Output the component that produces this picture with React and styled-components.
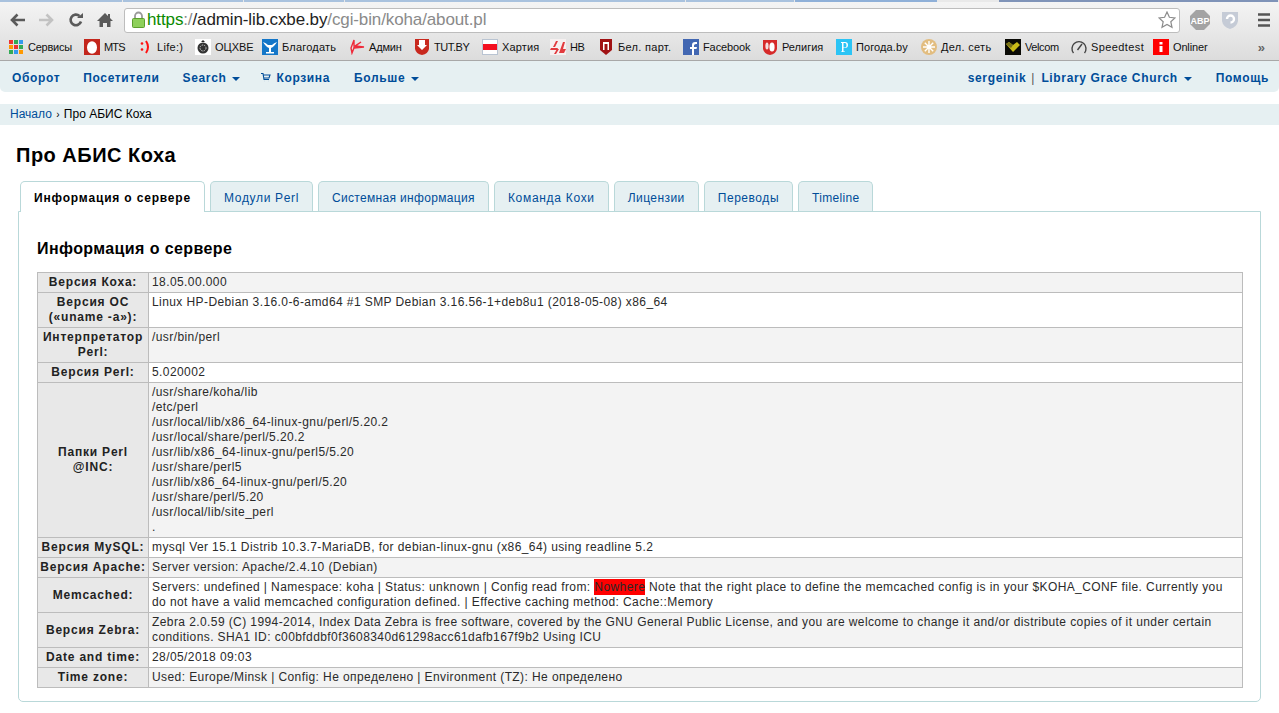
import React from "react";
import styled, { createGlobalStyle } from "styled-components";

const Global = createGlobalStyle`
  html, body { margin: 0; padding: 0; background: #fff; }
  body { font-family: "Liberation Sans", Arial, sans-serif; font-size: 12px; color: #000; overflow: hidden; }
`;

const Strip = styled.div`display:flex;height:2px;background:#e9e9e9;`;
const StripTab = styled.div`flex:${p => p.$w ? `0 0 ${p.$w}px` : "1"};background:${p => p.$c};margin-right:${p => p.$gap || 1}px;`;

const Toolbar = styled.div`
  display:flex;align-items:center;height:34px;padding:0 9px;box-sizing:border-box;
  background:linear-gradient(#f4f4f4,#e6e6e6);
`;
const NavIcon = styled.svg`width:16px;height:16px;flex:none;margin-right:${p => p.$mr}px;margin-top:2px;`;
const Omni = styled.div`
  flex:1;height:25px;box-sizing:border-box;margin:2px 10px 0 -1px;display:flex;align-items:center;
  background:#fff;border:1px solid #bdbdbd;border-radius:3px;padding:0 3px 0 6px;
`;
const UrlText = styled.div`font-size:17px;letter-spacing:-.12px;margin-left:1px;color:#8a8a8a;white-space:nowrap;flex:1;`;
const Green = styled.span`color:#0a8a00;`;
const Dark = styled.span`color:#222;`;
const ExtIcon = styled.svg`width:${p => p.$w || 20}px;height:20px;flex:none;margin-right:${p => p.$mr}px;margin-top:2px;`;

const Bookmarks = styled.div`
  display:flex;align-items:center;height:25px;box-sizing:border-box;padding:0 0 2px 8px;
  background:linear-gradient(#e6e6e6,#dcdcdc);border-bottom:1px solid #a8a8a8;
`;
const Bookmark = styled.div`display:flex;align-items:center;gap:4px;width:${p => p.$w}px;flex:none;`;
const BookmarkLabel = styled.span`font-size:11px;color:#111;white-space:nowrap;letter-spacing:${p => p.$ls}px;`;
const Fav = styled.svg`width:16px;height:16px;flex:none;`;
const Chevrons = styled.span`margin-left:auto;margin-right:14px;font-size:13px;font-weight:bold;color:#666;`;

const Nav = styled.nav`
  display:flex;justify-content:space-between;align-items:center;height:31px;box-sizing:border-box;
  background:#e6f0f2;border-radius:0 0 5px 5px;padding:2px 10px 0 12px;
`;
const NavGroup = styled.div`display:flex;align-items:center;`;
const NavLink = styled.a`
  display:inline-flex;align-items:center;font-weight:bold;font-size:12px;letter-spacing:.65px;color:#004d99;
  margin-right:${p => p.$mr ?? 0}px;white-space:nowrap;
`;
const Caret = styled.i`
  display:inline-block;margin-left:6px;margin-top:2px;width:0;height:0;
  border-left:4px solid transparent;border-right:4px solid transparent;border-top:4px solid #004d99;
`;
const Sep = styled.span`color:#555;margin:0 7px 0 5px;font-size:12px;`;
const Cart = styled.svg`width:11px;height:11px;margin-right:5px;`;

const Crumbs = styled.div`
  margin-top:12px;height:21px;box-sizing:border-box;background:#e6f0f2;padding:3px 0 0 10px;font-size:12px;line-height:15px;
`;
const CrumbLink = styled.a`color:#004d99;`;
const CrumbSep = styled.span`font-size:10px;margin:0 1px;`;

const Main = styled.main`padding:0 18px 0 18px;`;
const Title = styled.h1`font-size:20px;line-height:23px;font-weight:bold;margin:19px 0 14px -2px;letter-spacing:.5px;`;
const Tabs = styled.div`display:flex;gap:5px;margin-left:2px;position:relative;z-index:1;`;
const Tab = styled.a`
  box-sizing:border-box;padding:9px 13px 0;line-height:15px;font-size:12px;white-space:nowrap;
  border:1px solid #b9d8d9;border-bottom:none;border-radius:5px 5px 0 0;letter-spacing:${p => p.$ls}px;
  background:${p => p.$active ? "#fff" : "#e6f0f2"};
  color:${p => p.$active ? "#000" : "#004d99"};
  font-weight:${p => p.$active ? "bold" : "normal"};
  margin-bottom:${p => p.$active ? "-1px" : "0"};
  height:${p => p.$active ? "31px" : "30px"};
`;
const Panel = styled.section`
  border:1px solid #b9d8d9;border-radius:0 0 5px 5px;width:1243px;box-sizing:border-box;height:491px;padding:0 18px;
`;
const SubTitle = styled.h3`font-size:16px;line-height:18px;font-weight:bold;margin:28px 0 14px;letter-spacing:.4px;`;
const Table = styled.table`
  border-collapse:collapse;width:1206px;table-layout:fixed;font-size:12px;line-height:15px;
`;
const Row = styled.tr``;
const Th = styled.th`
  box-sizing:border-box;background:#e8e8e8;border:1px solid #bcbcbc;padding:2px 0;text-align:center;
  vertical-align:middle;font-weight:bold;color:#222;letter-spacing:.8px;
`;
const Td = styled.td`
  background:${p => p.$odd ? "#f3f3f3" : "#fff"};border:1px solid #bcbcbc;padding:2px 3px;vertical-align:top;color:#2a2a2a;
  letter-spacing:.41px;white-space:nowrap;
`;
const Alert = styled.span`background:#f00;padding:1px 0;`;

const Ico = {
  apps: (
    <Fav viewBox="0 0 16 16">
      {[["#e33", "#3a5", "#39e"], ["#f90", "#e33", "#3a5"], ["#3a5", "#39e", "#f90"]].map((r, y) =>
        r.map((c, x) => <rect key={`${x}${y}`} x={1 + x * 5} y={1 + y * 5} width="4" height="4" fill={c} />))}
    </Fav>
  ),
  mts: (
    <Fav viewBox="0 0 16 16"><rect width="16" height="16" fill="#c3261c" /><ellipse cx="8" cy="8.500" rx="5" ry="6.200" fill="#fff" /></Fav>
  ),
  life: (
    <Fav viewBox="0 0 16 16"><circle cx="5" cy="4.500" r="1.300" fill="#f11" /><circle cx="5" cy="10.500" r="1.300" fill="#f11" /><path d="M9 2q4 6 0 12" fill="none" stroke="#f11" strokeWidth="2" /></Fav>
  ),
  och: (
    <Fav viewBox="0 0 16 16"><rect width="16" height="16" fill="#fff" /><circle cx="8" cy="9" r="5.500" fill="#333" /><circle cx="8" cy="9" r="3" fill="none" stroke="#ccc" strokeDasharray="1.500 1" /><path d="M6 3h4L8 1z" fill="#222" /></Fav>
  ),
  blag: (
    <Fav viewBox="0 0 16 16"><rect width="16" height="16" fill="#1476c8" /><path d="M1 3q3 5 6 6V13h2V9q3-1 6-6-3 1-5 3H6Q4 4 1 3z" fill="#fff" /><rect x="4" y="13" width="8" height="1.500" fill="#fff" /></Fav>
  ),
  admin: (
    <Fav viewBox="0 0 16 16"><path d="M5 1L2 9l1 5 2-5 10-1-9-1 6-4-7 5z" fill="none" stroke="#ee2a3a" strokeWidth="1.400" /></Fav>
  ),
  tut: (
    <Fav viewBox="0 0 16 16"><path d="M1 0h14v10q-1 5-7 6-6-1-7-6z" fill="#c8281e" /><path d="M5 1h6v5h2L8 11 3 6h2z" fill="#fff" /></Fav>
  ),
  hart: (
    <Fav viewBox="0 0 16 16"><rect width="16" height="16" fill="#b9c4d2" /><rect x="1" y="1" width="14" height="4" fill="#fff" /><rect x="1" y="5" width="14" height="6" fill="#f30f1f" /><rect x="1" y="11" width="14" height="4" fill="#fff" /></Fav>
  ),
  nv: (
    <Fav viewBox="0 0 16 16"><rect width="16" height="16" fill="#f6f0f0" /><path d="M3 8L6 2h2L5 8zM1 9h7l-1 2H0zM4 15l3-5h2l-3 5zM9 3h4l-4 11h5l2-4h-3l2-7z" fill="#e23a3e" /></Fav>
  ),
  bel: (
    <Fav viewBox="0 0 16 16"><path d="M2 0h12v11l-6 5-6-5z" fill="#a01214" /><path d="M5 3h6v8H9.500V5h-3v6H5z" fill="#fff" /></Fav>
  ),
  fb: (
    <Fav viewBox="0 0 16 16"><rect width="16" height="16" fill="#4267b2" /><path d="M9 16v-6H7V8h2V6q0-3 3-3h2v2h-1q-2 0-2 1.500V8h3l-.5 2H11v6z" fill="#fff" /></Fav>
  ),
  rel: (
    <Fav viewBox="0 0 16 16"><path d="M1 1h14v9q-1 5-7 6-6-1-7-6z" fill="#d62a2a" /><ellipse cx="5" cy="7" rx="1.600" ry="3.500" fill="#f4dede" /><ellipse cx="10" cy="8" rx="2.600" ry="4.500" fill="#fff" /></Fav>
  ),
  pog: (
    <Fav viewBox="0 0 16 16"><rect width="16" height="16" fill="#2bc4f5" /><path d="M5 3h4q3 0 3 3t-3 3H7.500v3.500H9V13H5v-.5h1V4H5zM7.500 4v4.500H9q1.500 0 1.500-2.200T9 4z" fill="#fff" /></Fav>
  ),
  del: (
    <Fav viewBox="0 0 16 16"><circle cx="8" cy="8" r="8" fill="#e2bd80" /><g stroke="#fff" strokeWidth="1.400">
      <path d="M8 2v12M2 8h12M3.800 3.800l8.400 8.400M12.200 3.800l-8.400 8.400" /></g></Fav>
  ),
  vel: (
    <Fav viewBox="0 0 16 16"><rect width="16" height="16" fill="#0a0a05" /><path d="M1 5l3-2 4 3 4-3 3 3-7 7z" fill="#c8ba18" /><path d="M1 5l3-2 4 3-2 3z" fill="#77701a" /></Fav>
  ),
  speed: (
    <Fav viewBox="0 0 16 16"><path d="M2.500 14A7 7 0 1 1 13.500 14" fill="none" stroke="#444" strokeWidth="1.400" /><path d="M6.500 11L11 5" stroke="#444" strokeWidth="1.400" /></Fav>
  ),
  onl: (
    <Fav viewBox="0 0 16 16"><rect width="16" height="16" fill="#f00" /><rect x="6.500" y="3" width="3" height="2.500" fill="#fff" /><rect x="6.500" y="7" width="3" height="6" fill="#fff" /></Fav>
  ),
};

const bookmarks = [
  ["apps", "Сервисы", 76, -.25], ["mts", "MTS", 53, -.8], ["life", "Life:)", 58, .3], ["och", "ОЦХВЕ", 67, 0],
  ["blag", "Благодать", 87, .2], ["admin", "Админ", 65, -.15], ["tut", "TUT.BY", 68, -.4], ["hart", "Хартия", 68, .15],
  ["nv", "НВ", 48, -.4], ["bel", "Бел. парт.", 85, .3], ["fb", "Facebook", 79, -.1], ["rel", "Религия", 74, 0],
  ["pog", "Погода.by", 85, .1], ["del", "Дел. сеть", 84, .3], ["vel", "Velcom", 66, -.4], ["speed", "Speedtest", 82, .4],
  ["onl", "Onliner", 50, -.15],
];

const rows = [
  ["Версия Коха:", ["18.05.00.000"]],
  [<>Версия ОС<br />(«uname -a»):</>, ["Linux HP-Debian 3.16.0-6-amd64 #1 SMP Debian 3.16.56-1+deb8u1 (2018-05-08) x86_64"]],
  [<>Интерпретатор<br />Perl:</>, ["/usr/bin/perl"]],
  ["Версия Perl:", ["5.020002"]],
  [<>Папки Perl<br />@INC:</>, ["/usr/share/koha/lib", "/etc/perl", "/usr/local/lib/x86_64-linux-gnu/perl/5.20.2", "/usr/local/share/perl/5.20.2", "/usr/lib/x86_64-linux-gnu/perl5/5.20", "/usr/share/perl5", "/usr/lib/x86_64-linux-gnu/perl/5.20", "/usr/share/perl/5.20", "/usr/local/lib/site_perl", "."]],
  ["Версия MySQL:", ["mysql Ver 15.1 Distrib 10.3.7-MariaDB, for debian-linux-gnu (x86_64) using readline 5.2"]],
  ["Версия Apache:", ["Server version: Apache/2.4.10 (Debian)"]],
  ["Memcached:", [<>Servers: undefined | Namespace: koha | Status: unknown | Config read from: <Alert>Nowhere</Alert> Note that the right place to define the memcached config is in your $KOHA_CONF file. Currently you</>, "do not have a valid memcached configuration defined. | Effective caching method: Cache::Memory"]],
  ["Версия Zebra:", ["Zebra 2.0.59 (C) 1994-2014, Index Data Zebra is free software, covered by the GNU General Public License, and you are welcome to change it and/or distribute copies of it under certain", "conditions. SHA1 ID: c00bfddbf0f3608340d61298acc61dafb167f9b2 Using ICU"]],
  ["Date and time:", ["28/05/2018 09:03"]],
  ["Time zone:", ["Used: Europe/Minsk | Config: Не определено | Environment (TZ): Не определено"]],
];

const tabs = [["Информация о сервере", .83], ["Модули Perl", .66], ["Системная информация", .33], ["Команда Кохи", .7], ["Лицензии", .43], ["Переводы", .55], ["Timeline", .3]];

export default function App() {
  return (
    <>
      <Global />
      <Strip>
        <StripTab $w={122} $c="#a9c2de" /><StripTab $w={120} $c="#a9c2de" /><StripTab $w={100} $c="#a9c2de" />
        <StripTab $w={340} $c="#a9c2de" /><StripTab $w={108} $c="#a9c2de" /><StripTab $w={142} $gap={62} $c="#8fb0d8" />
        <StripTab $c="#7f93b8" />
      </Strip>
      <Toolbar>
        <NavIcon $mr={14} viewBox="0 0 16 16"><path d="M16 8H3M8.500 2.500L3 8l5.500 5.500" fill="none" stroke="#5a5a5a" strokeWidth="2.600" /></NavIcon>
        <NavIcon $mr={13} viewBox="0 0 16 16"><path d="M0 8h13M7.500 2.500L13 8l-5.500 5.500" fill="none" stroke="#c2c2c2" strokeWidth="2.600" /></NavIcon>
        <NavIcon $mr={13} viewBox="0 0 16 16"><path d="M13 9.500A5.300 5.300 0 1 1 11.500 4" fill="none" stroke="#5a5a5a" strokeWidth="2.600" /><path d="M9 6h6V1z" fill="#5a5a5a" /></NavIcon>
        <NavIcon $mr={12} viewBox="0 0 16 16"><path d="M8 1L0 9h2.500v6H6v-4h4v4h3.500V9H16l-3-3V2h-2v2z" fill="#5a5a5a" /></NavIcon>
        <Omni>
          <svg width="15" height="18" viewBox="0 0 15 18"><path d="M4 8V5a3.500 3.500 0 0 1 7 0v3" fill="none" stroke="#9a9a9a" strokeWidth="1.800" /><rect x="1.500" y="7.500" width="12" height="9" rx="1" fill="#8ed05a" stroke="#5c9e2e" /></svg>
          <UrlText><Green>https</Green>:/<Dark>/admin-lib.cxbe.by</Dark>/cgi-bin/koha/about.pl</UrlText>
          <svg width="18" height="18" viewBox="0 0 18 18"><path d="M9 1l2.400 5.300 5.600.6-4.200 3.800 1.200 5.600L9 13.500l-5 2.800 1.200-5.600L1 6.900l5.600-.6z" fill="#fff" stroke="#8c8c8c" strokeWidth="1.200" /></svg>
        </Omni>
        <ExtIcon $mr={12} viewBox="0 0 20 20"><path d="M6 0h8l6 6v8l-6 6H6l-6-6V6z" fill="#a3a3a3" /><text x="10" y="13.500" textAnchor="middle" fontSize="9" fontWeight="bold" fill="#fff" fontFamily="Liberation Sans">ABP</text></ExtIcon>
        <ExtIcon $mr={20} $w={16} viewBox="0 0 16 20"><path d="M0 2h16v9q-1 6-8 8-7-2-8-8z" fill="#c5cbd6" /><path d="M5 9a3.500 3.500 0 1 1 3.500 3.500" fill="none" stroke="#fff" strokeWidth="2.400" /></ExtIcon>
        <ExtIcon $mr={0} $w={12} viewBox="0 0 12 20"><path d="M0 4.500h12M0 10h12M0 15.500h12" stroke="#555" strokeWidth="2.600" /></ExtIcon>
      </Toolbar>
      <Bookmarks>
        {bookmarks.map(([icon, label, w, ls]) => (
          <Bookmark key={label} $w={w}>{Ico[icon]}<BookmarkLabel $ls={ls}>{label}</BookmarkLabel></Bookmark>
        ))}
        <Chevrons>»</Chevrons>
      </Bookmarks>
      <Nav>
        <NavGroup>
          <NavLink $mr={23}>Оборот</NavLink>
          <NavLink $mr={23}>Посетители</NavLink>
          <NavLink $mr={20}>Search<Caret /></NavLink>
          <NavLink $mr={24}>
            <Cart viewBox="0 0 11 11"><path d="M1 1.500h2l1 6h5M3.500 3h6.500l-1 3H4M4.500 9h.1M8.500 9h.1" fill="none" stroke="#004d99" strokeWidth="1.100" /></Cart>
            Корзина
          </NavLink>
          <NavLink>Больше<Caret /></NavLink>
        </NavGroup>
        <NavGroup>
          <NavLink>sergeinik</NavLink><Sep>|</Sep>
          <NavLink $mr={24}>Library Grace Church<Caret /></NavLink>
          <NavLink>Помощь</NavLink>
        </NavGroup>
      </Nav>
      <Crumbs><CrumbLink>Начало</CrumbLink> <CrumbSep>›</CrumbSep> Про АБИС Коха</Crumbs>
      <Main>
        <Title>Про АБИС Коха</Title>
        <Tabs>{tabs.map(([t, ls], i) => <Tab key={t} $active={i === 0} $ls={ls}>{t}</Tab>)}</Tabs>
        <Panel>
          <SubTitle>Информация о сервере</SubTitle>
          <Table>
            <colgroup><col style={{ width: 111 }} /><col /></colgroup>
            <tbody>
              {rows.map(([h, lines], i) => (
                <Row key={i}>
                  <Th>{h}</Th>
                  <Td $odd={i % 2 === 0}>{lines.map((l, j) => <div key={j}>{l}</div>)}</Td>
                </Row>
              ))}
            </tbody>
          </Table>
        </Panel>
      </Main>
    </>
  );
}
